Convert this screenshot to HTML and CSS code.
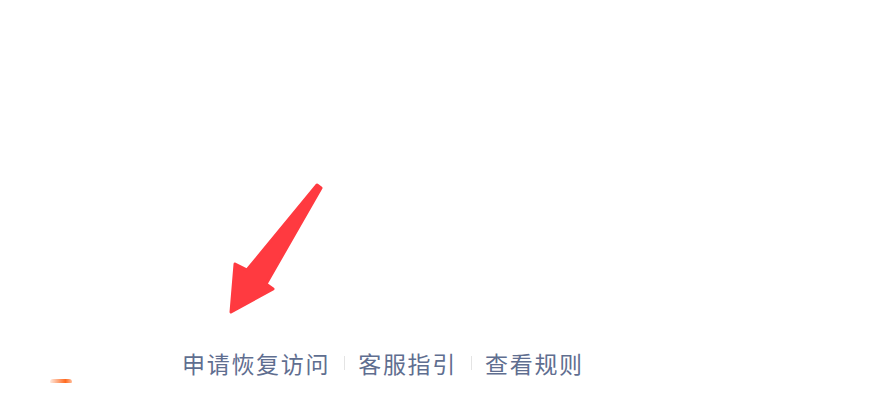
FILE: index.html
```html
<!DOCTYPE html>
<html lang="zh-CN">
<head>
<meta charset="UTF-8">
<meta name="viewport" content="width=device-width, initial-scale=1.0">
<title>申请恢复访问</title>
<link rel="stylesheet" href="styles.css">
</head>
<body>
<div class="page">
    <div class="links">
        <a class="link" href="#">申请恢复访问</a>
        <span class="sep"></span>
        <a class="link" href="#">客服指引</a>
        <span class="sep"></span>
        <a class="link" href="#">查看规则</a>
    </div>
    <!-- annotation arrow drawn over the screenshot -->
    <svg class="arrow" width="880" height="420" viewBox="0 0 880 420">
        <path d="M231 312 L235 264 L247 270 L317 185 L321 188 L266 284 L273 289 Z" fill="#ff3a40" stroke="#ff3a40" stroke-width="3" stroke-linejoin="round"/>
    </svg>
    <div class="blob"></div>
</div>
</body>
</html>
```

FILE: styles.css
```css
body, html {
    height: 100%;
    margin: 0;
    background: #ffffff;
    font-family: "Noto Sans CJK SC", "Noto Sans", sans-serif;
}
.page {
    position: relative;
    height: 420px;
    width: 880px;
    overflow: hidden;
}
.links {
    display: flex;
    align-items: center;
    padding-top: 346px;
    padding-left: 182px;
}
.link {
    color: #5f6e90;
    font-size: 23px;
    line-height: 34px;
    text-decoration: none;
    letter-spacing: 1.7px;
}
.sep {
    width: 1px;
    height: 14px;
    background: #e4e4e4;
    margin: 0 13px 0 14px;
}
.arrow {
    position: absolute;
    left: 0;
    top: 0;
}
.blob {
    position: absolute;
    left: 50px;
    top: 379px;
    width: 22px;
    height: 4px;
    border-radius: 6px 6px 2px 2px;
    background: linear-gradient(90deg, rgba(255,110,40,0.15), #ff6a20 70%, rgba(255,120,50,0.5));
    filter: blur(0.6px);
}
```
